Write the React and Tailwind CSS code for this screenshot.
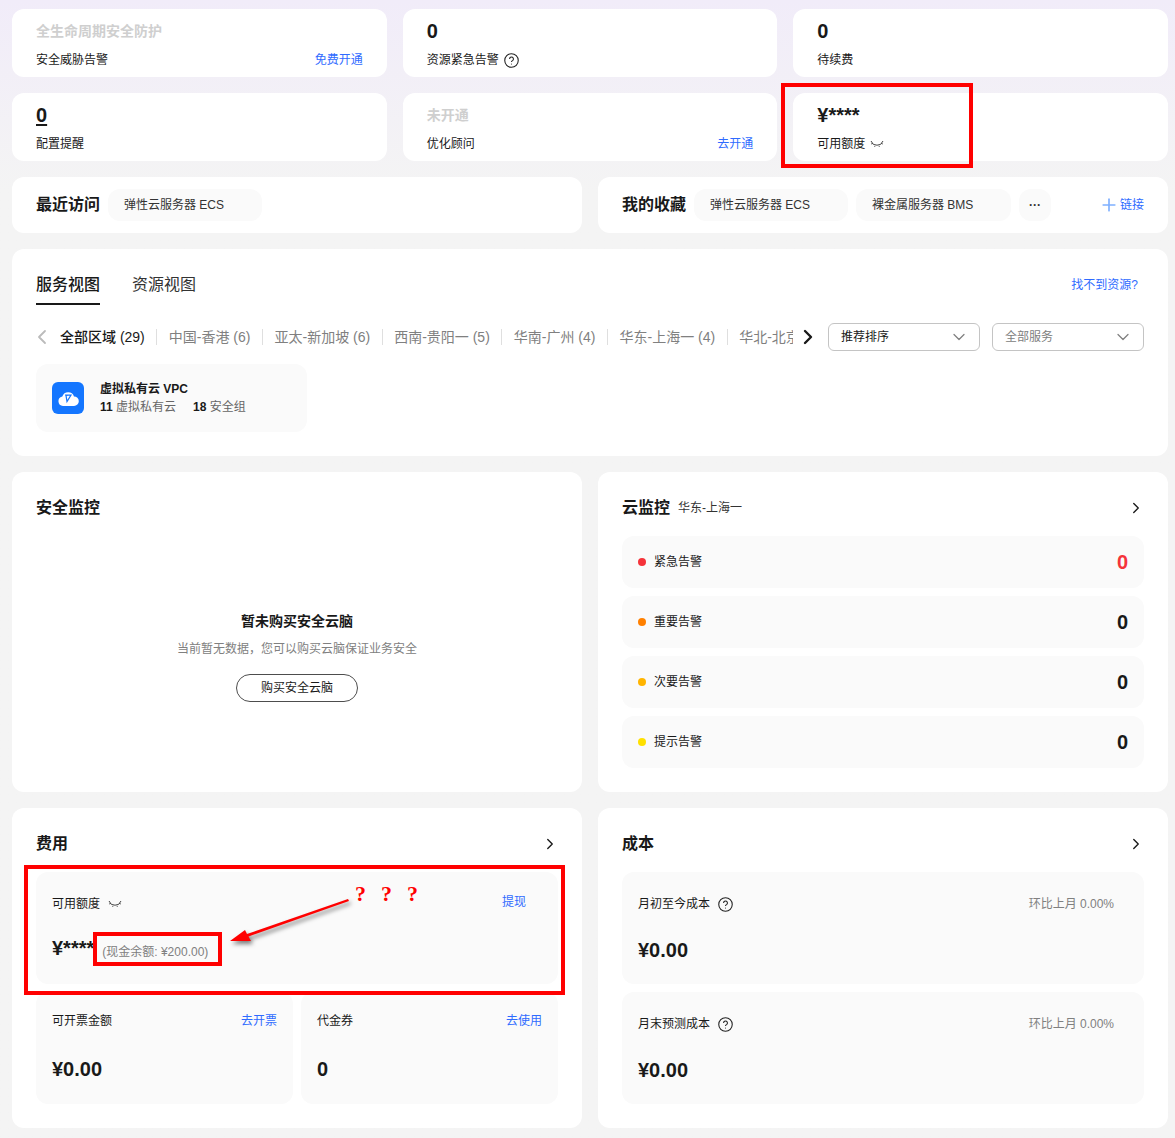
import React from "react";
import { ChevronDown, ChevronLeft, ChevronRight, Plus } from "lucide-react";

const fontStack = "font-['Liberation_Sans','Noto_Sans_CJK_SC',sans-serif]";

// closed-eye icon used next to masked amounts
const EyeClosed = () => (
  <svg width="14" height="8" viewBox="0 0 14 8" fill="none" stroke="#444" strokeWidth="1">
    <path d="M1 1l2.4 3.4Q7 6 10.6 4.4L13 1" />
    <path d="M1 4l2-.6M13 4l-2-.6M5 5.8l-.4 1.2M9 5.8l.4 1.2" strokeWidth="0.8" />
  </svg>
);

const HelpIcon = () => (
  <svg width="15" height="15" viewBox="0 0 14 14" fill="none" stroke="#222">
    <circle cx="7" cy="7" r="6.3" />
    <path d="M5.2 5.5a1.8 1.8 0 1 1 2.7 1.6c-.6.3-.9.7-.9 1.3" />
    <circle cx="7" cy="10.2" r=".5" fill="#222" stroke="none" />
  </svg>
);

const StatCard = ({ value, label, link, muted, underline, extra }) => (
  <div className="h-[68px] bg-white rounded-xl pl-6 pr-6 pt-[10px]">
    <div className={`h-6 leading-6 ${muted ? "text-sm font-bold text-[#cfcfcf]" : "text-xl font-bold text-[#191919]"}`}>
      {underline ? <span className="underline underline-offset-2">{value}</span> : value}
    </div>
    <div className="flex items-center justify-between mt-[7px] h-5 text-xs text-[#191919]">
      <div className="flex items-center gap-[5px]">
        {label}
        {extra}
      </div>
      {link && <span className="text-[#2f6bff]">{link}</span>}
    </div>
  </div>
);

const Chip = ({ children, width }) => (
  <div className={`h-8 bg-[#fafafa] rounded-xl flex items-center px-4 text-xs text-[#333] ${width}`}>
    {children}
  </div>
);

const regions = ["中国-香港 (6)", "亚太-新加坡 (6)", "西南-贵阳一 (5)", "华南-广州 (4)", "华东-上海一 (4)"];

const Select = ({ label, dark }) => (
  <div className="w-[152px] h-[28px] border border-[#c4c4c4] rounded-md flex items-center justify-between pl-3 pr-[10px] shrink-0">
    <span className={`text-xs ${dark ? "text-[#191919]" : "text-[#808080]"}`}>{label}</span>
    <ChevronDown size={20} strokeWidth={1.5} className="text-[#808080]" />
  </div>
);

const alerts = [
  { name: "紧急告警", dot: "bg-[#f5333a]", value: "0", color: "text-[#f5333a]" },
  { name: "重要告警", dot: "bg-[#ff8000]", value: "0", color: "text-[#191919]" },
  { name: "次要告警", dot: "bg-[#ffb400]", value: "0", color: "text-[#191919]" },
  { name: "提示告警", dot: "bg-[#ffe000]", value: "0", color: "text-[#191919]" },
];

const CardTitle = ({ children, sub }) => (
  <div className="flex items-center justify-between h-[22px]">
    <div className="flex items-center gap-2">
      <span className="text-base font-bold text-[#191919]">{children}</span>
      {sub && <span className="text-xs text-[#333]">{sub}</span>}
    </div>
    <ChevronRight size={18} strokeWidth={1.8} className="text-[#191919] -mr-px" />
  </div>
);

const CostBlock = ({ title, label }) => (
  <div className="h-[112px] bg-[#fafafa] rounded-xl px-4 pt-6">
    <div className="flex justify-between items-center h-4 text-xs">
      <div className="flex items-center gap-[8px] text-[#191919]">
        {title}
        <HelpIcon />
      </div>
      <span className="text-[#808080] mr-[14px]">{label}</span>
    </div>
    <div className="mt-[26px] text-xl font-bold text-[#191919] leading-6">¥0.00</div>
  </div>
);

const SmallBlock = ({ title, link, value }) => (
  <div className="h-[112px] bg-[#fafafa] rounded-xl px-4 pt-[21px]">
    <div className="flex justify-between text-xs h-4 leading-4">
      <span className="text-[#191919]">{title}</span>
      <span className="text-[#2f6bff]">{link}</span>
    </div>
    <div className="mt-[28px] text-xl font-bold text-[#191919] leading-6">{value}</div>
  </div>
);

export default function App() {
  return (
    <div className={`relative w-[1175px] h-[1138px] overflow-hidden bg-gradient-to-b from-[#f1ecf9] to-[#f4f4f4] to-[190px] pt-[9px] pl-3 pr-[7px] ${fontStack}`}>
      <div className="grid grid-cols-3 gap-4">
        <StatCard value="全生命周期安全防护" label="安全威胁告警" link="免费开通" muted />
        <StatCard value="0" label="资源紧急告警" extra={<HelpIcon />} />
        <StatCard value="0" label="待续费" />
        <StatCard value="0" label="配置提醒" underline />
        <StatCard value="未开通" label="优化顾问" link="去开通" muted />
        <StatCard value="¥****" label="可用额度" extra={<EyeClosed />} />
      </div>

      <div className="grid grid-cols-2 gap-4 mt-4">
        <div className="h-14 bg-white rounded-xl flex items-center pl-6">
          <span className="text-base font-bold text-[#191919] mr-2">最近访问</span>
          <Chip width="w-[154px]">弹性云服务器 ECS</Chip>
        </div>
        <div className="h-14 bg-white rounded-xl flex items-center pl-6 pr-6">
          <span className="text-base font-bold text-[#191919] mr-2">我的收藏</span>
          <Chip width="w-[154px] mr-2">弹性云服务器 ECS</Chip>
          <Chip width="w-[155px] mr-2">裸金属服务器 BMS</Chip>
          <Chip width="w-[32px] justify-center font-bold">···</Chip>
          <div className="ml-auto flex items-center text-xs text-[#2f6bff]">
            <Plus size={20} strokeWidth={2} className="text-[#7fb0ff] mr-px" />
            链接
          </div>
        </div>
      </div>

      <div className="h-[207px] bg-white rounded-xl mt-4 px-6 pt-6">
        <div className="flex justify-between">
          <div className="flex gap-8 text-base">
            <div className="text-[#191919] font-medium border-b-2 border-[#191919] h-8 leading-6">服务视图</div>
            <div className="text-[#333] leading-6">资源视图</div>
          </div>
          <span className="text-xs text-[#2f6bff] mt-1 mr-[6px]">找不到资源?</span>
        </div>
        <div className="flex items-center mt-[18px] h-7">
          <ChevronLeft size={24} strokeWidth={1.8} className="text-[#bbb] -ml-[6px] mr-[6px] shrink-0" />
          <div className="w-[733px] shrink-0 overflow-hidden flex items-center text-sm whitespace-nowrap">
            <span className="text-[#191919] pr-[11.5px] border-r border-[#dfdfdf] leading-4 font-medium">全部区域 (29)</span>
            {regions.map((r) => (
              <span key={r} className="text-[#808080] px-[11.5px] border-r border-[#dfdfdf] leading-4">{r}</span>
            ))}
            <span className="text-[#808080] pl-[11.5px] leading-4">华北-北京</span>
          </div>
          <ChevronRight size={24} strokeWidth={2.4} className="text-[#191919] ml-[3px] shrink-0" />
          <div className="flex gap-3 ml-auto">
            <Select label="推荐排序" dark />
            <Select label="全部服务" />
          </div>
        </div>
        <div className="w-[271px] h-[68px] bg-[#fafafa] rounded-xl mt-[13px] flex items-center pl-4 gap-4">
          <div className="w-8 h-8 rounded-md bg-[#1476ff] flex items-center justify-center">
            <svg width="21" height="16" viewBox="0 0 21 16">
              <path d="M5 16a4.8 4.8 0 0 1-.7-9.5A6.2 6.2 0 0 1 16 6.4 4.8 4.8 0 0 1 16 16z" fill="#fff" />
              <path d="M7 5h6l-4 6.5-1-6M8 5.5l5-.5" stroke="#1476ff" strokeWidth="1.2" fill="none" />
            </svg>
          </div>
          <div>
            <div className="text-xs font-bold text-[#191919] leading-[18px]">虚拟私有云 VPC</div>
            <div className="text-xs text-[#666] leading-[18px]">
              <b className="text-[#191919]">11</b> 虚拟私有云
              <b className="text-[#191919] ml-[17px]">18</b> 安全组
            </div>
          </div>
        </div>
      </div>

      <div className="grid grid-cols-2 gap-4 mt-4">
        <div className="h-[320px] bg-white rounded-xl px-6 pt-[25px]">
          <div className="text-base font-bold text-[#191919] leading-[22px]">安全监控</div>
          <div className="flex flex-col items-center mt-[92px]">
            <div className="text-sm font-bold text-[#191919] leading-5">暂未购买安全云脑</div>
            <div className="text-xs text-[#808080] mt-2 leading-5">当前暂无数据，您可以购买云脑保证业务安全</div>
            <div className="w-[122px] h-7 mt-[15px] border border-[#4d4d4d] rounded-full flex items-center justify-center text-xs text-[#191919]">购买安全云脑</div>
          </div>
        </div>
        <div className="h-[320px] bg-white rounded-xl px-6 pt-[25px]">
          <CardTitle sub="华东-上海一">云监控</CardTitle>
          <div className="flex flex-col gap-2 mt-[17px]">
            {alerts.map((a) => (
              <div key={a.name} className="h-[52px] bg-[#fafafa] rounded-xl flex items-center justify-between pl-4 pr-4">
                <div className="flex items-center gap-2 text-xs text-[#191919]">
                  <span className={`w-2 h-2 rounded-full ${a.dot}`} />
                  {a.name}
                </div>
                <span className={`text-xl font-bold ${a.color}`}>{a.value}</span>
              </div>
            ))}
          </div>
        </div>
      </div>

      <div className="grid grid-cols-2 gap-4 mt-4">
        <div className="h-[320px] bg-white rounded-xl px-6 pt-[25px]">
          <CardTitle>费用</CardTitle>
          <div className="h-[112px] bg-[#fafafa] rounded-xl mt-[17px] px-4 pt-6">
            <div className="flex justify-between items-center h-4 text-xs">
              <div className="flex items-center gap-2 text-[#191919]">
                可用额度
                <EyeClosed />
              </div>
              <span className="text-[#2f6bff] mr-4 -mt-1">提现</span>
            </div>
            <div className="flex items-baseline mt-[24px] text-xl font-bold text-[#191919] leading-6">
              <span>¥****</span>
              <span className="text-xs font-normal text-[#808080] ml-2 translate-y-px">(现金余额: ¥200.00)</span>
            </div>
          </div>
          <div className="grid grid-cols-2 gap-2 mt-2">
            <SmallBlock title="可开票金额" link="去开票" value="¥0.00" />
            <SmallBlock title="代金券" link="去使用" value="0" />
          </div>
        </div>
        <div className="h-[320px] bg-white rounded-xl px-6 pt-[25px]">
          <CardTitle>成本</CardTitle>
          <div className="flex flex-col gap-2 mt-[17px]">
            <CostBlock title="月初至今成本" label="环比上月 0.00%" />
            <CostBlock title="月末预测成本" label="环比上月 0.00%" />
          </div>
        </div>
      </div>

      {/* hand-drawn review annotations on top of the screenshot */}
      <div className="absolute left-[781px] top-[83px] w-[192px] h-[85px] border-4 border-[#ff0000]" />
      <div className="absolute left-[24px] top-[865px] w-[541px] h-[130px] border-4 border-[#ff0000]" />
      <div className="absolute left-[93px] top-[932px] w-[129px] h-[34px] border-4 border-[#ff0000]" />
      <svg className="absolute left-[225px] top-[895px] drop-shadow-[2px_3px_2px_rgba(0,0,0,0.5)]" width="130" height="55" viewBox="0 0 130 55">
        <path d="M123 4 L22 39 L20 35 L5 46 L26 46 L23.5 41.5 L124 6 Z" fill="#ff0000" />
      </svg>
      <div className="absolute left-[355px] top-[880px] flex gap-[15px] text-[22px] font-bold text-[#ff0000] font-['Liberation_Serif',serif] leading-7">
        <span>?</span>
        <span>?</span>
        <span>?</span>
      </div>
    </div>
  );
}
